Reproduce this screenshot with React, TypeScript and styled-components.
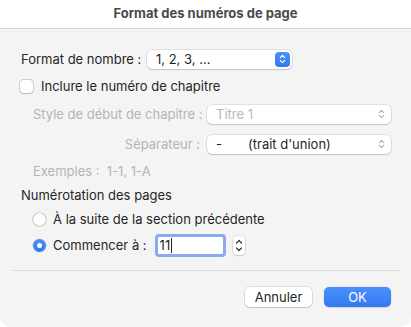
import React from "react";
import styled, { createGlobalStyle } from "styled-components";

const Global = createGlobalStyle`
  html, body { margin: 0; padding: 0; background: #ffffff; }
  body { font-family: "Inter", "Liberation Sans", sans-serif; -webkit-font-smoothing: antialiased; }
  * { box-sizing: border-box; }
`;

const Window = styled.div`
  width: 411px;
  height: 327px;
  background: #f4f4f4;
  border-bottom-left-radius: 10px;
  border-bottom-right-radius: 10px;
  display: flex;
  flex-direction: column;
  overflow: hidden;
`;

const TitleBar = styled.div`
  height: 29px;
  flex: none;
  background: #ffffff;
  border-bottom: 1px solid #d6d6d6;
  display: flex;
  align-items: center;
  justify-content: center;
  padding-bottom: 3px;
  font-size: 13px;
  font-weight: 700;
  color: #4a4a4a;
`;

const Body = styled.div`
  display: flex;
  flex-direction: column;
  padding: 20px 12px 0 12px;
`;

const Row = styled.div<{ $mt?: number; $indent?: number; $h?: number }>`
  display: flex;
  align-items: center;
  height: ${(p) => p.$h ?? 20}px;
  margin-top: ${(p) => p.$mt ?? 0}px;
  padding-left: ${(p) => p.$indent ?? 0}px;
  font-size: 13px;
  color: #262626;
`;

const Label = styled.span<{ $disabled?: boolean; $width?: number; $right?: boolean }>`
  color: ${(p) => (p.$disabled ? "#b4b4b4" : "#262626")};
  white-space: nowrap;
  ${(p) => (p.$width ? `width: ${p.$width}px; flex: none;` : "")}
  text-align: ${(p) => (p.$right ? "right" : "left")};
`;

const Popup = styled.div<{ $width: number; $ml?: number }>`
  position: relative;
  width: ${(p) => p.$width}px;
  height: 19px;
  margin-left: ${(p) => p.$ml ?? 0}px;
  background: #ffffff;
  border-radius: 5px;
  box-shadow: 0 0 0 0.5px rgba(0, 0, 0, 0.16), 0 1px 1.5px rgba(0, 0, 0, 0.12);
  display: flex;
  align-items: center;
  padding-left: 9px;
  font-size: 13px;
`;

const PopupText = styled.span<{ $disabled?: boolean }>`
  color: ${(p) => (p.$disabled ? "#b8b8b8" : "#1f1f1f")};
  white-space: nowrap;
`;

const Dash = styled.span`
  display: inline-block;
  width: 32px;
`;

const BlueStepper = styled.div`
  position: absolute;
  right: 2px;
  top: 2px;
  width: 15px;
  height: 15px;
  border-radius: 4px;
  background: linear-gradient(#4b90f8, #2f78f2);
  display: flex;
  align-items: center;
  justify-content: center;
`;

const PlainArrows = styled.div`
  position: absolute;
  right: 4px;
  top: 2px;
  width: 11px;
  height: 15px;
  display: flex;
  align-items: center;
  justify-content: center;
`;

const Checkbox = styled.div`
  width: 13px;
  height: 13px;
  flex: none;
  border-radius: 3px;
  background: #ffffff;
  box-shadow: 0 0 0 0.5px rgba(0, 0, 0, 0.3), 0 0.5px 1px rgba(0, 0, 0, 0.1);
  margin-left: 8px;
  margin-right: 8px;
`;

const Radio = styled.div<{ $on?: boolean }>`
  width: 13px;
  height: 13px;
  flex: none;
  border-radius: 50%;
  margin-right: 7px;
  display: flex;
  align-items: center;
  justify-content: center;
  background: ${(p) => (p.$on ? "linear-gradient(#4b90f8, #2f78f2)" : "#ffffff")};
  box-shadow: ${(p) =>
    p.$on ? "0 0 0 0.5px rgba(0,0,0,0.15)" : "0 0 0 0.5px rgba(0,0,0,0.3), 0 0.5px 1px rgba(0,0,0,0.1)"};
  &::after {
    content: "";
    display: ${(p) => (p.$on ? "block" : "none")};
    width: 5px;
    height: 5px;
    border-radius: 50%;
    background: #ffffff;
  }
`;

const TextField = styled.div`
  width: 71px;
  height: 23px;
  margin-left: 8px;
  border-radius: 4px;
  border: 3px solid #8aa9f0;
  background: #ffffff;
  display: flex;
  align-items: center;
  padding-left: 2px;
  font-size: 13px;
  color: #1f1f1f;
`;

const Caret = styled.span`
  display: inline-block;
  width: 1px;
  height: 15px;
  background: #1f1f1f;
  margin-left: 1px;
`;

const Stepper = styled.div`
  width: 12px;
  height: 19px;
  margin-left: 7px;
  border-radius: 4px;
  background: #ffffff;
  box-shadow: 0 0 0 0.5px rgba(0, 0, 0, 0.16), 0 1px 1.5px rgba(0, 0, 0, 0.12);
  display: flex;
  align-items: center;
  justify-content: center;
`;

const Separator = styled.div`
  height: 1px;
  background: #dcdcdc;
  margin-top: 13px;
`;

const ButtonBar = styled.div`
  display: flex;
  justify-content: flex-end;
  gap: 12px;
  margin-top: 16px;
  padding-right: 8px;
`;

const Button = styled.div<{ $primary?: boolean }>`
  width: 67px;
  height: 20px;
  border-radius: 5px;
  display: flex;
  align-items: center;
  justify-content: center;
  font-size: 13px;
  color: ${(p) => (p.$primary ? "#ffffff" : "#1f1f1f")};
  background: ${(p) => (p.$primary ? "linear-gradient(#4c8ff8, #327af3)" : "#ffffff")};
  box-shadow: ${(p) =>
    p.$primary
      ? "0 0 0 0.5px rgba(0,0,0,0.08), 0 1px 1px rgba(0,0,0,0.1)"
      : "0 0 0 0.5px rgba(0,0,0,0.16), 0 1px 1.5px rgba(0,0,0,0.14)"};
`;

const Chevrons = ({ color, size = 11 }: { color: string; size?: number }) => (
  <svg width={size * 0.7} height={size} viewBox="0 0 7 11" fill="none">
    <path d="M1 4 L3.5 1.5 L6 4" stroke={color} strokeWidth="1.2" strokeLinecap="round" strokeLinejoin="round" />
    <path d="M1 7 L3.5 9.5 L6 7" stroke={color} strokeWidth="1.2" strokeLinecap="round" strokeLinejoin="round" />
  </svg>
);

const StepArrows = () => (
  <svg width="8" height="15" viewBox="0 0 8 15" fill="none">
    <path d="M1.5 5 L4 2.5 L6.5 5" stroke="#333" strokeWidth="1.2" strokeLinecap="round" strokeLinejoin="round" />
    <path d="M1.5 10 L4 12.5 L6.5 10" stroke="#333" strokeWidth="1.2" strokeLinecap="round" strokeLinejoin="round" />
  </svg>
);

export default function App() {
  return (
    <>
      <Global />
      <Window>
        <TitleBar>Format des numéros de page</TitleBar>
        <Body>
          <Row $indent={9}>
            <Label $width={126}>Format de nombre :</Label>
            <Popup $width={145}>
              <PopupText>1, 2, 3, ...</PopupText>
              <BlueStepper>
                <Chevrons color="#ffffff" size={10} />
              </BlueStepper>
            </Popup>
          </Row>
          <Row $mt={7}>
            <Checkbox />
            <Label>Inclure le numéro de chapitre</Label>
          </Row>
          <Row $mt={8} $indent={21}>
            <Label $disabled $width={167} $right>
              Style de début de chapitre :
            </Label>
            <Popup $width={184} $ml={7}>
              <PopupText $disabled>Titre 1</PopupText>
              <PlainArrows>
                <Chevrons color="#b0b0b0" size={10} />
              </PlainArrows>
            </Popup>
          </Row>
          <Row $mt={10} $indent={21}>
            <Label $disabled $width={167} $right>
              Séparateur :
            </Label>
            <Popup $width={184} $ml={7}>
              <PopupText>
                <Dash>-</Dash>(trait d'union)
              </PopupText>
              <PlainArrows>
                <Chevrons color="#b0b0b0" size={10} />
              </PlainArrows>
            </Popup>
          </Row>
          <Row $mt={7} $indent={21}>
            <Label $disabled>Exemples :&nbsp;&nbsp;1-1, 1-A</Label>
          </Row>
          <Row $mt={4} $indent={9}>
            <Label>Numérotation des pages</Label>
          </Row>
          <Row $mt={4} $indent={21}>
            <Radio />
            <Label>À la suite de la section précédente</Label>
          </Row>
          <Row $mt={4} $indent={21} $h={24}>
            <Radio $on />
            <Label>Commencer à :</Label>
            <TextField>
              11<Caret />
            </TextField>
            <Stepper>
              <StepArrows />
            </Stepper>
          </Row>
          <Separator />
          <ButtonBar>
            <Button>Annuler</Button>
            <Button $primary>OK</Button>
          </ButtonBar>
        </Body>
      </Window>
    </>
  );
}
